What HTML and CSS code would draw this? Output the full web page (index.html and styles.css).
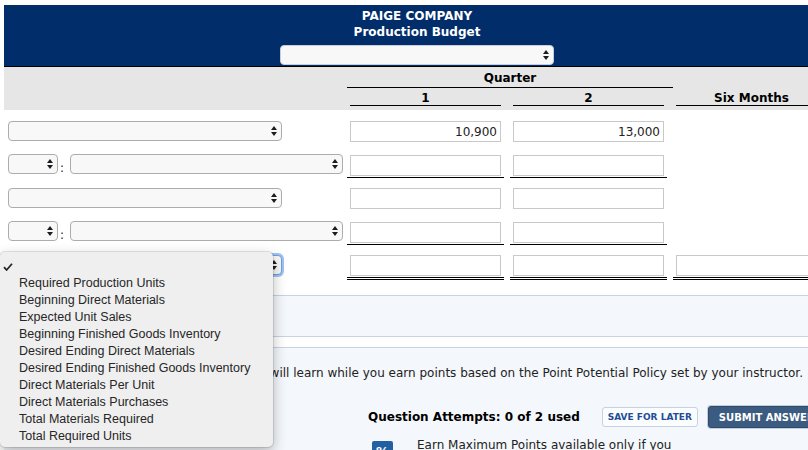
FILE: index.html
```html
<!DOCTYPE html>
<html lang="en">
<head>
<meta charset="utf-8">
<title>Paige Company – Production Budget</title>
<link rel="stylesheet" href="styles.css">
</head>
<body>
<div class="page">
  <header class="banner">
    <div class="title">PAIGE COMPANY</div>
    <div class="title">Production Budget</div>
    <div class="select select-head"><svg viewBox="0 0 6 10"><path d="M0 4 3 0 6 4Z M0 6 3 10 6 6Z"/></svg></div>
  </header>

  <div class="thead">
    <div class="quarter">Quarter</div>
    <div class="hcol hc1">1</div>
    <div class="hcol hc2">2</div>
    <div class="hcol hc3">Six Months</div>
  </div>

  <div class="tbody">
    <div class="row">
      <div class="label"><div class="select sel-wide"><svg viewBox="0 0 6 10"><path d="M0 4 3 0 6 4Z M0 6 3 10 6 6Z"/></svg></div></div>
      <div class="cell"><input class="input" type="text" value="10,900" readonly></div>
      <div class="cell"><input class="input" type="text" value="13,000" readonly></div>
    </div>
    <div class="row">
      <div class="label pair">
        <div class="select sel-small"><svg viewBox="0 0 6 10"><path d="M0 4 3 0 6 4Z M0 6 3 10 6 6Z"/></svg></div>
        <span class="colon">:</span>
        <div class="select sel-mid"><svg viewBox="0 0 6 10"><path d="M0 4 3 0 6 4Z M0 6 3 10 6 6Z"/></svg></div>
      </div>
      <div class="cell single"><input class="input" type="text" value="" readonly></div>
      <div class="cell single"><input class="input" type="text" value="" readonly></div>
    </div>
    <div class="row">
      <div class="label"><div class="select sel-wide"><svg viewBox="0 0 6 10"><path d="M0 4 3 0 6 4Z M0 6 3 10 6 6Z"/></svg></div></div>
      <div class="cell"><input class="input" type="text" value="" readonly></div>
      <div class="cell"><input class="input" type="text" value="" readonly></div>
    </div>
    <div class="row">
      <div class="label pair">
        <div class="select sel-small"><svg viewBox="0 0 6 10"><path d="M0 4 3 0 6 4Z M0 6 3 10 6 6Z"/></svg></div>
        <span class="colon">:</span>
        <div class="select sel-mid"><svg viewBox="0 0 6 10"><path d="M0 4 3 0 6 4Z M0 6 3 10 6 6Z"/></svg></div>
      </div>
      <div class="cell single"><input class="input" type="text" value="" readonly></div>
      <div class="cell single"><input class="input" type="text" value="" readonly></div>
    </div>
    <div class="row">
      <div class="label"><div class="select sel-wide focused"><svg viewBox="0 0 6 10"><path d="M0 4 3 0 6 4Z M0 6 3 10 6 6Z"/></svg></div></div>
      <div class="cell double"><input class="input" type="text" value="" readonly></div>
      <div class="cell double"><input class="input" type="text" value="" readonly></div>
      <div class="cell double"><input class="input" type="text" value="" readonly></div>
    </div>
  </div>

  <section class="notice"></section>

  <section class="actions">
    <p class="policy">You will learn while you earn points based on the Point Potential Policy set by your instructor.</p>
    <div class="attempts">
      <span class="attempts-text">Question Attempts: 0 of 2 used</span>
      <button class="btn btn-save" type="button">SAVE FOR LATER</button>
      <button class="btn btn-submit" type="button">SUBMIT ANSWER</button>
    </div>
    <div class="earn">
      <span class="pct">%</span>
      <span class="earn-text">Earn Maximum Points available only if you</span>
    </div>
  </section>

  <ul class="menu">
    <li class="check-row"><svg width="10" height="8" viewBox="0 0 10 8"><path d="M1 4.2 3.6 7 9 0.8"/></svg></li>
    <li>Required Production Units</li>
    <li>Beginning Direct Materials</li>
    <li>Expected Unit Sales</li>
    <li>Beginning Finished Goods Inventory</li>
    <li>Desired Ending Direct Materials</li>
    <li>Desired Ending Finished Goods Inventory</li>
    <li>Direct Materials Per Unit</li>
    <li>Direct Materials Purchases</li>
    <li>Total Materials Required</li>
    <li>Total Required Units</li>
  </ul>
</div>
</body>
</html>
```

FILE: styles.css
```css
html, body {
  margin: 0;
  padding: 0;
  overflow: hidden;
  background: #fff;
}

.page {
  position: relative;
  width: 826px;
  padding: 5px 0 0 4px;
  font-family: "DejaVu Sans", Verdana, sans-serif;
  font-size: 12px;
  color: #222;
}

/* ---------- banner ---------- */
.banner {
  background: #012d6a;
  color: #fff;
  font-weight: bold;
  display: flex;
  flex-direction: column;
  align-items: center;
  padding: 3px 0 1px;
  border-bottom: 1px solid #000;
}

.title {
  line-height: 16px;
}

/* ---------- select look-alike ---------- */
.select {
  box-sizing: border-box;
  height: 20px;
  border: 1px solid #acacac;
  border-radius: 4px;
  background: #f8f8f8;
  display: flex;
  align-items: center;
  justify-content: flex-end;
  padding-right: 4px;
  flex-shrink: 0;
}

.select svg {
  width: 6px;
  height: 10px;
  display: block;
  fill: #1c1c1c;
}

.select-head {
  width: 274px;
  margin-top: 5px;
  border-color: #c9ced6;
}

.sel-wide { width: 274px; }
.sel-small { width: 50px; }
.sel-mid { width: 273px; }

.focused {
  border-color: #6a9fe2;
  box-shadow: 0 0 0 2px rgba(96, 153, 232, 0.6);
}

/* ---------- table header ---------- */
.thead {
  display: grid;
  grid-template-columns: 337px 157px 157px 157px;
  column-gap: 6px;
  background: #e6e6e6;
  padding-bottom: 4px;
  font-weight: bold;
  color: #000;
  text-align: center;
}

.quarter {
  grid-column: 2 / 4;
  grid-row: 1;
  margin-right: -6px;
  padding: 3px 0 1px;
  line-height: 16px;
  border-bottom: 1px solid #000;
}

.hcol {
  grid-row: 2;
  margin: 0 3px;
  padding-top: 4px;
  line-height: 13px;
  border-bottom: 1px solid #000;
}

.hc1 { grid-column: 2; }
.hc2 { grid-column: 3; }
.hc3 { grid-column: 4; }

/* ---------- table body ---------- */
.tbody {
  display: flex;
  flex-direction: column;
  gap: 8.5px;
  padding: 11px 0 15px;
}

.row {
  display: grid;
  grid-template-columns: 337px 157px 157px 157px;
  column-gap: 6px;
  height: 25px;
  align-items: start;
}

.label {
  padding-left: 4px;
  display: flex;
  align-items: flex-start;
}

.pair {
  margin-top: -1px;
}

.colon {
  align-self: flex-end;
  line-height: 12px;
  margin: 0 6px 0 2px;
  color: #222;
}

.cell {
  padding: 0 3px 1px;
  border-bottom: 1px solid transparent;
}

.cell.single {
  border-bottom-color: #000;
}

.cell.double {
  border-bottom: 3px double #000;
}

.input {
  display: block;
  box-sizing: border-box;
  width: 100%;
  height: 21px;
  margin: 0;
  padding: 0 3px;
  border: 1px solid #c9c9c9;
  border-radius: 0;
  background: #fff;
  font: inherit;
  color: #222;
  text-align: right;
  outline: none;
}

/* ---------- lower sections ---------- */
.notice {
  height: 40px;
  background: #f4f7fb;
  border-top: 1px solid #c8d3e3;
  border-bottom: 1px solid #c8d3e3;
  margin-bottom: 10px;
}

.actions {
  background: #f4f7fb;
  border-top: 1px solid #c8d3e3;
  padding: 17px 0 30px;
}

.policy {
  margin: 0;
  line-height: 16px;
  text-align: right;
  padding-right: 27px;
  white-space: nowrap;
  color: #222;
}

.attempts {
  display: flex;
  align-items: center;
  margin-top: 25px;
  padding-left: 364px;
  height: 22px;
}

.attempts-text {
  font-weight: bold;
  color: #000;
  margin-right: 22px;
}

.btn {
  font-family: "DejaVu Sans", Verdana, sans-serif;
  font-weight: bold;
  border-radius: 3px;
  margin: 0;
  white-space: nowrap;
  cursor: pointer;
}

.btn-save {
  box-sizing: border-box;
  width: 96px;
  height: 20px;
  padding: 0;
  font-size: 9px;
  color: #1f4e96;
  background: #fbfcfe;
  border: 1px solid #c5d2e4;
  margin-right: 10px;
}

.btn-submit {
  box-sizing: border-box;
  height: 22px;
  padding: 0 10px;
  font-size: 10px;
  color: #fff;
  background: #3b5b80;
  border: 1px solid #2f4c6d;
  box-shadow: 0 0 0 1px #c3cedb;
}

.earn {
  display: flex;
  align-items: flex-start;
  margin-top: 9px;
  padding-left: 368px;
}

.pct {
  width: 21px;
  height: 21px;
  margin-top: 4px;
  border-radius: 2px;
  background: #2360a3;
  color: #fff;
  font-weight: bold;
  font-size: 13px;
  line-height: 21px;
  text-align: center;
}

.earn-text {
  margin-left: 24px;
  line-height: 16px;
  color: #222;
}

/* ---------- open dropdown menu ---------- */
.menu {
  position: absolute;
  left: 0;
  top: 252px;
  width: 273px;
  box-sizing: border-box;
  margin: 0;
  padding: 6px 0 2px;
  list-style: none;
  background: #efefef;
  border-radius: 5px;
  box-shadow: 0 0 0 1px rgba(0, 0, 0, 0.1), 0 5px 14px rgba(0, 0, 0, 0.28);
  font-family: "Liberation Sans", Arial, sans-serif;
  font-size: 12.5px;
  color: #262626;
}

.menu li {
  height: 17px;
  line-height: 17px;
  padding-left: 19px;
  white-space: nowrap;
}

.menu .check-row {
  display: flex;
  align-items: center;
  padding-left: 3px;
}

.check-row svg {
  display: block;
  fill: none;
  stroke: #222;
  stroke-width: 1.7;
}
```
